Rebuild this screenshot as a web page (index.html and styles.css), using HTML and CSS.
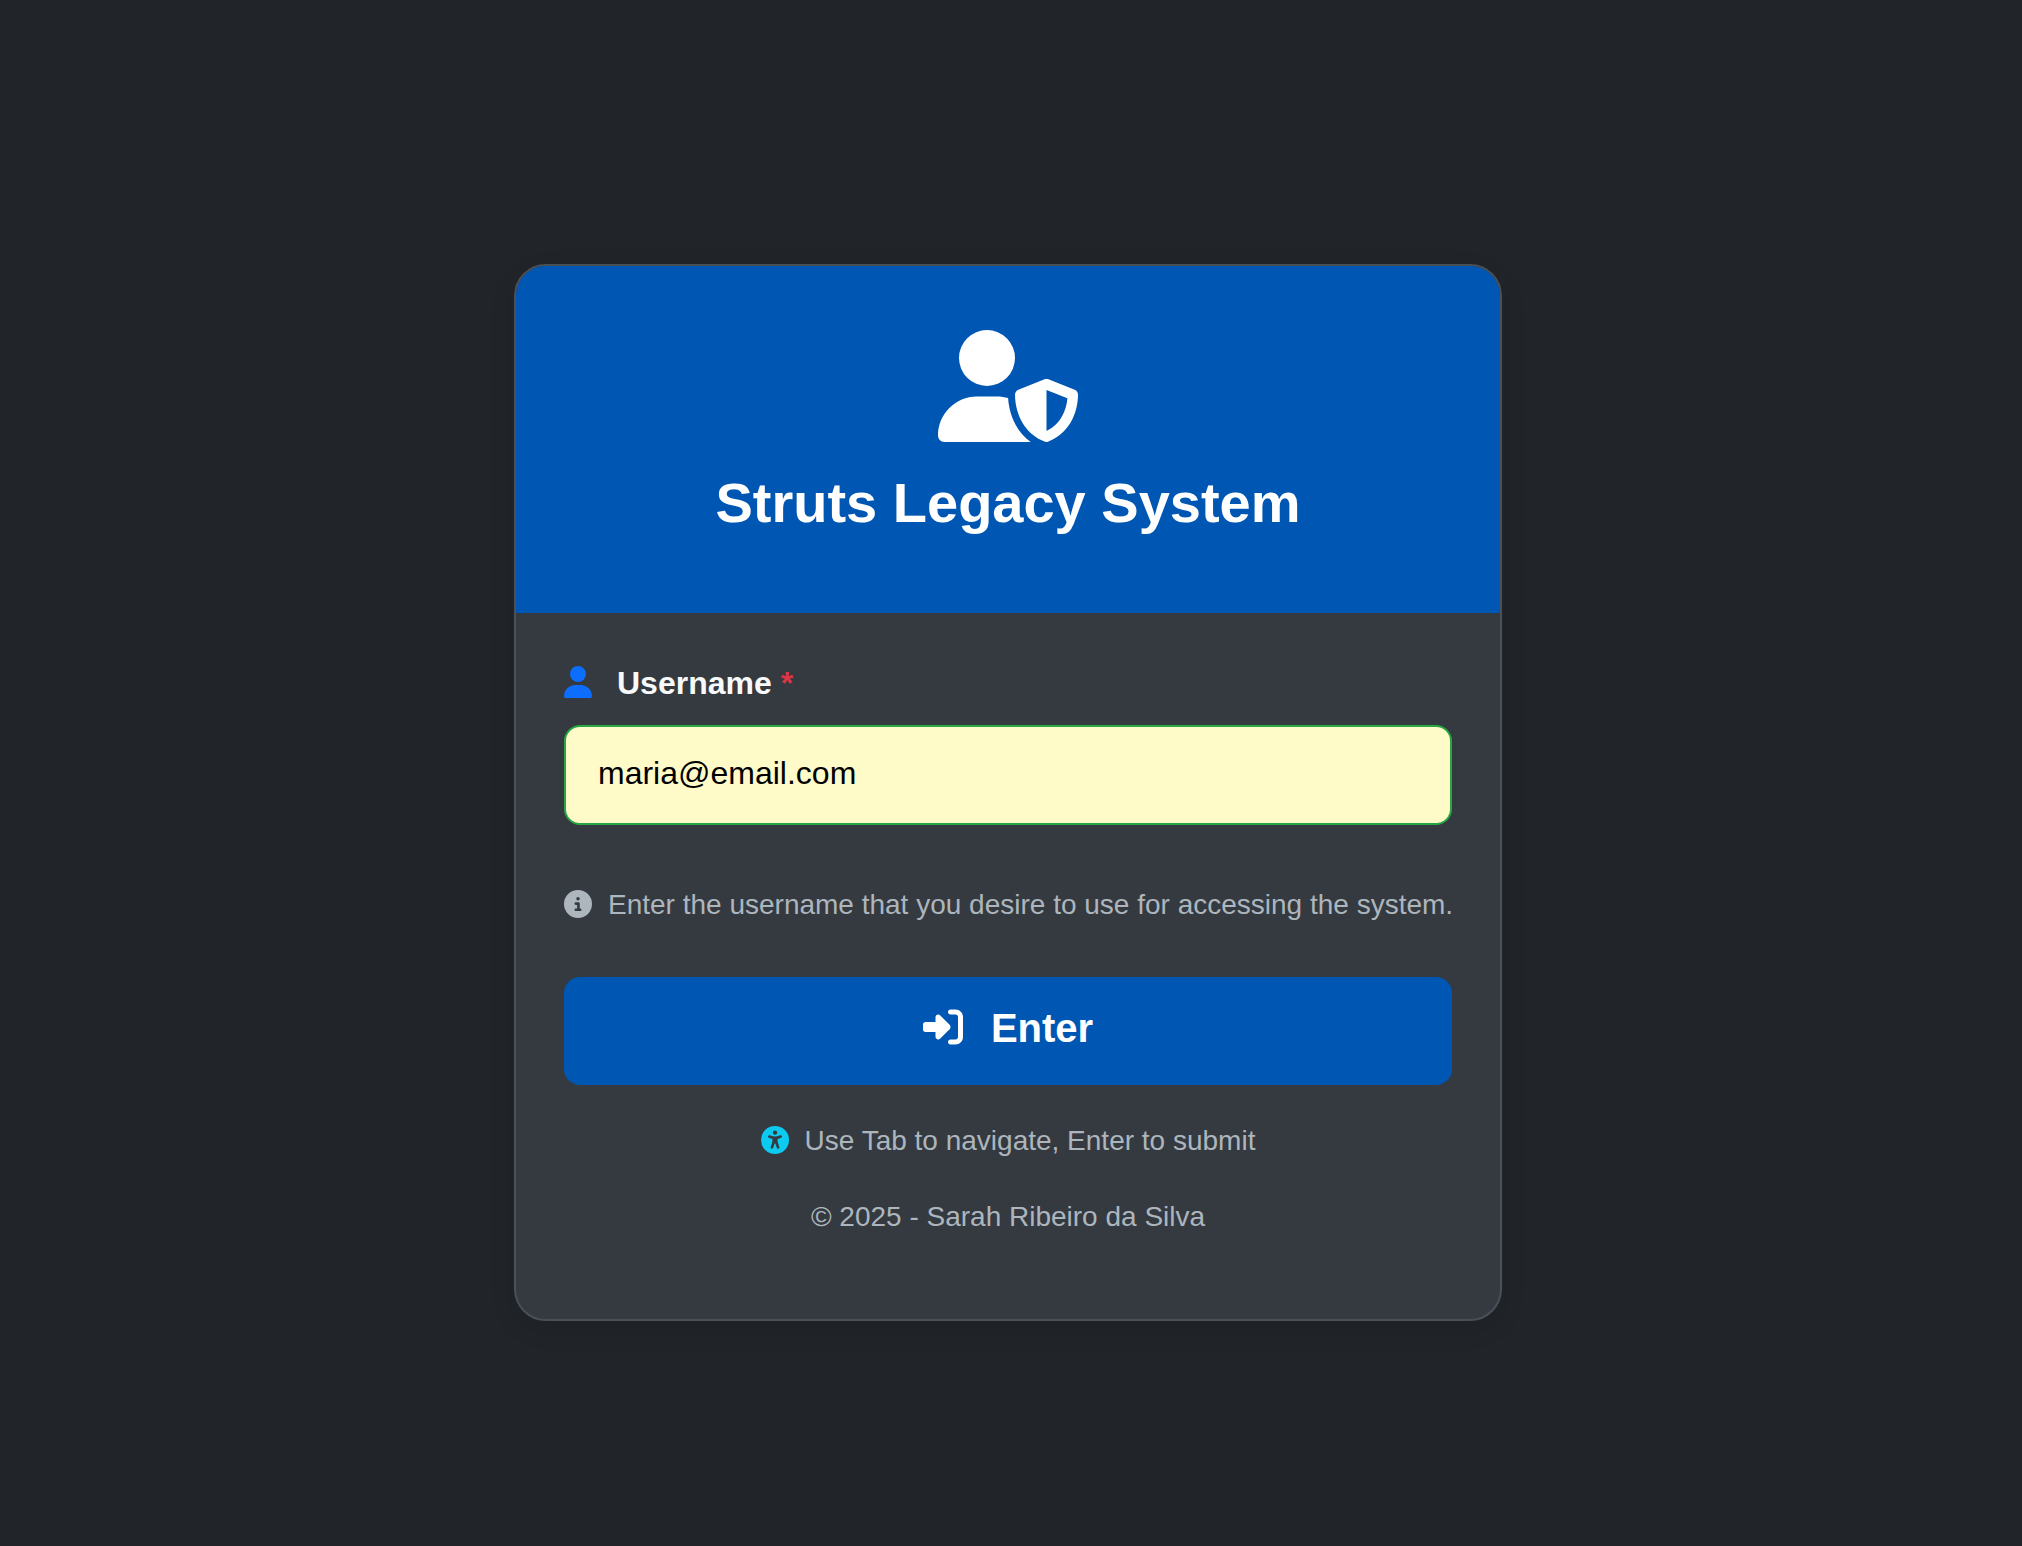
FILE: index.html
```html
<!DOCTYPE html>
<html lang="en">
<head>
<meta charset="utf-8">
<title>Struts Legacy System</title>
<link rel="stylesheet" href="styles.css">
</head>
<body>
<main class="card">
  <header class="card-header">
    <svg class="brand-icon" viewBox="0 0 640 512" aria-hidden="true"><path d="M224 256A128 128 0 1 0 224 0a128 128 0 1 0 0 256zm-45.7 48C79.8 304 0 383.8 0 482.3C0 498.7 13.3 512 29.7 512H418.3c1.8 0 3.5-.2 5.3-.5c-76.3-55.1-99.8-141-103.1-200.2c-16.1-4.8-33.1-7.3-50.7-7.3H178.3zm308.8-78.3l-120 48C358 277.4 352 286.2 352 296c0 63.3 25.9 168.8 134.8 214.2c5.9 2.5 12.6 2.5 18.5 0C614.1 464.8 640 359.3 640 296c0-9.8-6-18.6-15.1-22.3l-120-48c-5.7-2.3-12.1-2.3-17.8 0zM591.4 312c-3.9 50.7-27.2 116.7-95.4 149.7V273.8L591.4 312z"/></svg>
    <h1 class="title">Struts Legacy System</h1>
  </header>
  <form class="card-body">
    <label class="label" for="username">
      <svg class="label-icon" viewBox="0 0 448 512" aria-hidden="true"><path d="M224 256A128 128 0 1 0 224 0a128 128 0 1 0 0 256zm-45.7 48C79.8 304 0 383.8 0 482.3C0 498.7 13.3 512 29.7 512H418.3c16.4 0 29.7-13.3 29.7-29.7C448 383.8 368.2 304 269.7 304H178.3z"/></svg>
      <span>Username <span class="required">*</span></span>
    </label>
    <input class="input" id="username" type="text" value="maria@email.com">
    <p class="hint">
      <svg class="small-icon" viewBox="0 0 512 512" aria-hidden="true"><path d="M256 512A256 256 0 1 0 256 0a256 256 0 1 0 0 512zM216 336h24V272H216c-13.3 0-24-10.7-24-24s10.7-24 24-24h48c13.3 0 24 10.7 24 24v88h8c13.3 0 24 10.7 24 24s-10.7 24-24 24H216c-13.3 0-24-10.7-24-24s10.7-24 24-24zm40-208a32 32 0 1 1 0 64 32 32 0 1 1 0-64z"/></svg>
      <span>Enter the username that you desire to use for accessing the system.</span>
    </p>
    <button class="submit" type="button">
      <svg class="submit-icon" viewBox="0 0 512 512" aria-hidden="true"><path d="M217.9 105.9L340.7 228.7c7.2 7.2 11.3 17.1 11.3 27.3s-4.1 20.1-11.3 27.3L217.9 406.1c-6.4 6.4-15 9.9-24 9.9c-18.7 0-33.9-15.2-33.9-33.9l0-62.1L32 320c-17.7 0-32-14.3-32-32l0-64c0-17.7 14.3-32 32-32l128 0 0-62.1c0-18.7 15.2-33.9 33.9-33.9c9 0 17.6 3.6 24 9.9zM352 416l64 0c17.7 0 32-14.3 32-32l0-256c0-17.7-14.3-32-32-32l-64 0c-17.7 0-32-14.3-32-32s14.3-32 32-32l64 0c53 0 96 43 96 96l0 256c0 53-43 96-96 96l-64 0c-17.7 0-32-14.3-32-32s14.3-32 32-32z"/></svg>
      <span>Enter</span>
    </button>
    <p class="hint keyboard">
      <svg class="small-icon access" viewBox="0 0 512 512" aria-hidden="true"><path d="M0 256a256 256 0 1 1 512 0A256 256 0 1 1 0 256zm161.5-86.1c-12.2-5.2-26.3 .4-31.5 12.6s.4 26.3 12.6 31.5l11.9 5.1c17.3 7.4 35.2 12.9 53.6 16.3v50.1c0 4.3-.7 8.6-2.1 12.6l-28.7 86.1c-4.2 12.6 2.6 26.2 15.2 30.4s26.2-2.6 30.4-15.2l24.4-73.2c1.3-3.8 4.8-6.4 8.8-6.4s7.6 2.6 8.8 6.4l24.4 73.2c4.2 12.6 17.8 19.4 30.4 15.2s19.4-17.8 15.2-30.4l-28.7-86.1c-1.4-4.1-2.1-8.3-2.1-12.6V235.5c18.4-3.5 36.3-8.9 53.6-16.3l11.9-5.1c12.2-5.2 17.8-19.3 12.6-31.5s-19.3-17.8-31.5-12.6L338.7 175c-26.1 11.2-54.2 17-82.7 17s-56.5-5.8-82.7-17l-11.9-5.1zM256 160a40 40 0 1 0 0-80 40 40 0 1 0 0 80z"/></svg>
      <span>Use Tab to navigate, Enter to submit</span>
    </p>
    <p class="hint copyright">© 2025 - Sarah Ribeiro da Silva</p>
  </form>
</main>
</body>
</html>
```
FILE: styles.css
```css
* {
  box-sizing: border-box;
}

body {
  margin: 0;
  height: 1546px;
  padding: 264px 6px 0 0;
  overflow: hidden;
  background: #212529;
  color: #f8f9fa;
  font: 32px/48px "Liberation Sans", Arial, sans-serif;
}

svg {
  display: block;
  flex: none;
  fill: currentColor;
}

.card {
  width: 988px;
  height: 1057px;
  margin: 0 auto;
  overflow: hidden;
  border: 2px solid #495057;
  border-radius: 32px;
  background: #343a40;
  box-shadow: 0 8px 24px rgba(0, 0, 0, 0.12);
}

.card-header {
  display: flex;
  flex-direction: column;
  align-items: center;
  height: 347px;
  padding-top: 64px;
  background: #0056b3;
  color: #fff;
}

.brand-icon {
  width: 140px;
  height: 112px;
}

.title {
  margin: 27px 0 0;
  font-size: 56px;
  line-height: 68px;
  white-space: nowrap;
}

.card-body {
  display: flex;
  flex-direction: column;
  padding: 46px 48px 0;
}

.label {
  display: flex;
  gap: 25px;
  height: 48px;
  font-weight: 700;
}

.label-icon {
  width: 28px;
  height: 32px;
  margin-top: 7px;
  color: #0d6efd;
}

.required {
  color: #dc3545;
}

.input {
  height: 100px;
  margin: 18px 0 0;
  padding: 0 32px 4px;
  border: 2px solid #28a745;
  border-radius: 16px;
  outline: none;
  background: #fffbc8;
  color: #000;
  font: inherit;
}

.hint {
  display: flex;
  gap: 16px;
  height: 42px;
  margin: 59px 0 0;
  color: #adb5bd;
  font-size: 28px;
  line-height: 42px;
  white-space: nowrap;
}

.small-icon {
  width: 28px;
  height: 28px;
  margin-top: 6px;
}

.submit {
  display: flex;
  justify-content: center;
  gap: 28px;
  height: 108px;
  margin: 51px 0 0;
  padding: 27px 0 0;
  border: 0;
  border-radius: 16px;
  background: #0056b3;
  color: #fff;
  font: 700 40px/48px "Liberation Sans", Arial, sans-serif;
}

.submit-icon {
  width: 40px;
  height: 40px;
  margin-top: 3px;
}

.keyboard {
  justify-content: center;
  margin-top: 35px;
}

.access {
  color: #0dcaf0;
}

.copyright {
  justify-content: center;
  margin-top: 34px;
}
```
